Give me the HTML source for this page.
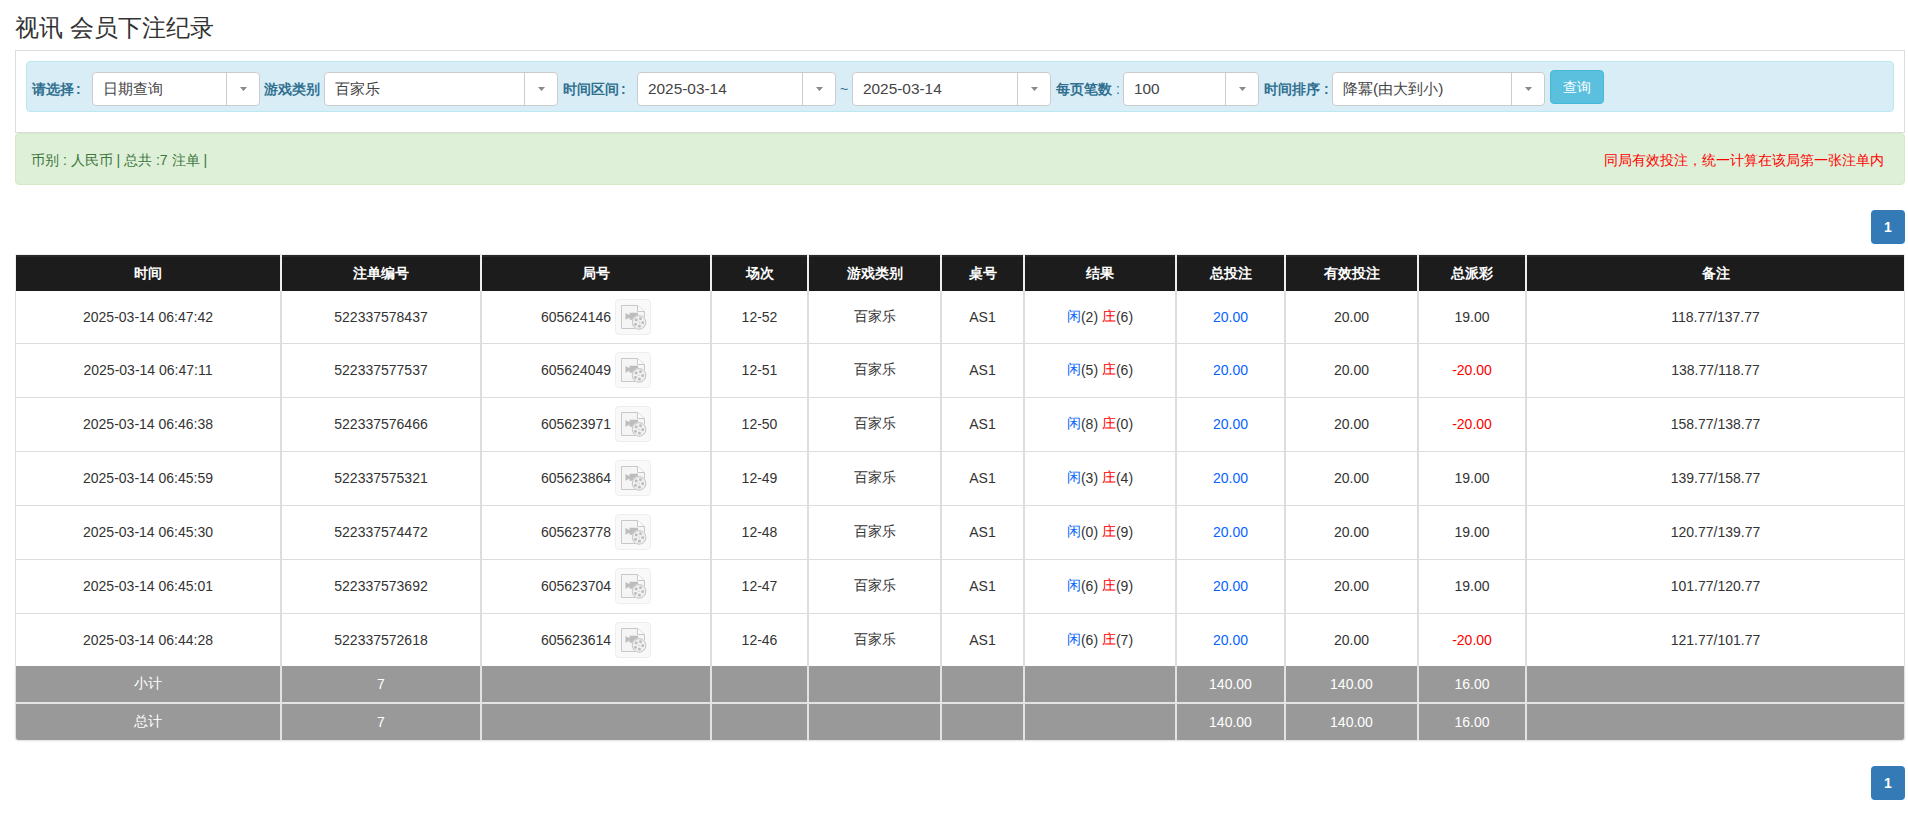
<!DOCTYPE html>
<html><head><meta charset="utf-8">
<style>
*{box-sizing:border-box;margin:0;padding:0}
html,body{width:1908px;height:813px;overflow:hidden;background:#fff}
body{font-family:"Liberation Sans",sans-serif;color:#333;position:relative;font-size:14px}
.a{position:absolute}
.title{left:15px;top:12px;font-size:24px;line-height:32px;color:#333;white-space:nowrap}
.panel{left:15px;top:50px;width:1890px;height:83px;border:1px solid #ddd;border-bottom-color:#ddd}
.info{left:26px;top:61px;width:1868px;height:51px;background:#d9edf7;border:1px solid #bce8f1;border-radius:4px}
.lbl{top:72px;height:34px;line-height:34px;font-size:14px;font-weight:bold;color:#31708f;white-space:nowrap}
.sel{top:72px;height:34px;background:#fff;border:1px solid #cbcbcb;border-radius:4px;font-size:15.4px;color:#444;line-height:32px;padding-left:10px;white-space:nowrap}
.sel .dv{position:absolute;right:32px;top:0;bottom:0;width:1px;background:#cbcbcb}
.sel .ct{position:absolute;right:12px;top:14px;width:7px;height:4px;display:block}
.btn{left:1550px;top:70px;width:54px;height:34px;background:#5bc0de;border:1px solid #46b8da;border-radius:4px;color:#fff;font-size:14px;line-height:32px;text-align:center}
.ok{left:15px;top:133px;width:1890px;height:52px;background:#dff0d8;border:1px solid #d6e9c6;border-radius:4px}
.okt{left:31px;top:150px;font-size:14px;line-height:20px;color:#3c763d;white-space:nowrap}
.red{right:24px;top:150px;font-size:14px;line-height:20px;color:#f00;white-space:nowrap}
.pg{left:1871px;width:34px;height:34px;background:#337ab7;border-radius:4px;color:#fff;font-weight:bold;font-size:14px;line-height:34px;text-align:center}
.tr{position:absolute;left:15px;width:1890px;display:flex}
.tr>div{flex:none;display:flex;align-items:center;justify-content:center;height:100%;white-space:nowrap;border-left:1px solid #ddd;border-right:1px solid #ddd}
.th{top:254px;height:37px}
.th>div{background:linear-gradient(#282828 0,#282828 2px,#1c1c1c 2px);color:#fff;font-weight:bold;font-size:14px;border-color:#eee!important;border-top:1px solid #eee}
.td{background:#fff}
.td>div{font-size:14px;color:#333}
.tot>div{background:#999;color:#fff;font-size:14px;border-color:#e3e3e3!important}
.ic{display:inline-block;width:36px;height:36px;margin-left:4px;border:1px solid #eee;border-radius:4px;background:#f9f9f9;vertical-align:middle}
.ic svg{display:block;margin:-1px}
.c{display:inline-flex;align-items:center;white-space:pre}.b{color:#0664ff}.r{color:#f00}
.hl{position:absolute;left:15px;width:1890px;height:1px;background:#ddd}
.tw{position:absolute;left:15px;top:666px;width:1890px;height:74px;border-radius:0 0 4px 4px;box-shadow:0 1px 2px rgba(0,0,0,.12)}
.last>div:first-child{border-bottom-left-radius:3px}.last>div:last-child{border-bottom-right-radius:3px}
.up .c{position:relative;top:-1px}
.th .c{position:relative;top:1px}
</style></head><body>

<div class="a title">视讯 会员下注纪录</div>
<div class="a panel"></div><div class="a info"></div>
<div class="a lbl" style="left:32px">请选择<span style="margin-left:2px">:</span></div>
<div class="a lbl" style="left:264px">游戏类别</div>
<div class="a lbl" style="left:563px">时间区间<span style="margin-left:2px">:</span></div>
<div class="a lbl" style="left:840px;font-weight:normal;font-size:14px">~</div>
<div class="a lbl" style="left:1056px">每页笔数<span style="font-weight:normal"> :</span></div>
<div class="a lbl" style="left:1264px">时间排序 :</div>
<div class="a sel" style="left:92px;width:168px">日期查询<span class="dv"></span><svg class="ct" viewBox="0 0 7 4"><path d="M0 0H7L3.5 4Z" fill="#888"/></svg></div>
<div class="a sel" style="left:324px;width:234px">百家乐<span class="dv"></span><svg class="ct" viewBox="0 0 7 4"><path d="M0 0H7L3.5 4Z" fill="#888"/></svg></div>
<div class="a sel" style="left:637px;width:199px">2025-03-14<span class="dv"></span><svg class="ct" viewBox="0 0 7 4"><path d="M0 0H7L3.5 4Z" fill="#888"/></svg></div>
<div class="a sel" style="left:852px;width:199px">2025-03-14<span class="dv"></span><svg class="ct" viewBox="0 0 7 4"><path d="M0 0H7L3.5 4Z" fill="#888"/></svg></div>
<div class="a sel" style="left:1123px;width:136px">100<span class="dv"></span><svg class="ct" viewBox="0 0 7 4"><path d="M0 0H7L3.5 4Z" fill="#888"/></svg></div>
<div class="a sel" style="left:1332px;width:213px">降冪(由大到小)<span class="dv"></span><svg class="ct" viewBox="0 0 7 4"><path d="M0 0H7L3.5 4Z" fill="#888"/></svg></div>
<div class="a btn">查询</div>
<div class="a ok"></div>
<div class="a okt">币别 : 人民币 | 总共 :7 注单 |</div>
<div class="a red">同局有效投注，统一计算在该局第一张注单内</div>
<div class="a pg" style="top:210px">1</div>
<div class="a pg" style="top:766px">1</div>
<div class="tr th"><div style="width:266px"><span class="c">时间</span></div><div style="width:200px"><span class="c">注单编号</span></div><div style="width:230px"><span class="c">局号</span></div><div style="width:97px"><span class="c">场次</span></div><div style="width:133px"><span class="c">游戏类别</span></div><div style="width:83px"><span class="c">桌号</span></div><div style="width:152px"><span class="c">结果</span></div><div style="width:109px"><span class="c">总投注</span></div><div style="width:133px"><span class="c">有效投注</span></div><div style="width:108px"><span class="c">总派彩</span></div><div style="width:379px"><span class="c">备注</span></div></div>
<div class="tr td" style="top:291px;height:52px"><div style="width:266px"><span class="c">2025-03-14 06:47:42</span></div><div style="width:200px"><span class="c">522337578437</span></div><div style="width:230px"><span class="c">605624146<span class="ic"><svg width="36" height="36" viewBox="0 0 36 36"><path d="M6.5 6.5H22.5L29.5 12.5V26L26 29.5H6.5Z" fill="#f5f5f5"/><path d="M20.5 29.5H6.5V6.5H22.5L29.5 12.5V26.5" fill="none" stroke="#c8c8c8" stroke-width="1"/><path d="M22.5 6.5V12.5H29.5" fill="#fcfcfc" stroke="#c8c8c8" stroke-width="1"/><path d="M10.5 14L14.5 16.3V13.8H23V20.8H14.5V18.5L10.5 20.8Z" fill="#bdbdbd"/><circle cx="24.1" cy="23.4" r="7.3" fill="#f9f9f9"/><circle cx="24.1" cy="23.4" r="6.8" fill="#efefef" stroke="#c4c4c4" stroke-width="1"/><circle cx="21.2" cy="20.9" r="1.4" fill="#bbb"/><circle cx="25.5" cy="19.7" r="1.4" fill="#bbb"/><circle cx="27.7" cy="23.7" r="1.4" fill="#bbb"/><circle cx="24.4" cy="27.2" r="1.4" fill="#bbb"/><circle cx="20.5" cy="25.4" r="1.4" fill="#bbb"/><circle cx="24.1" cy="23.4" r="0.6" fill="#c8c8c8"/></svg></span></span></div><div style="width:97px"><span class="c">12-52</span></div><div style="width:133px"><span class="c">百家乐</span></div><div style="width:83px"><span class="c">AS1</span></div><div style="width:152px"><span class="c"><span class="b">闲</span>(2) <span class="r">庄</span>(6)</span></div><div style="width:109px"><span class="c"><span class="b">20.00</span></span></div><div style="width:133px"><span class="c">20.00</span></div><div style="width:108px"><span class="c">19.00</span></div><div style="width:379px"><span class="c">118.77/137.77</span></div></div>
<div class="tr td up" style="top:344px;height:53px"><div style="width:266px"><span class="c">2025-03-14 06:47:11</span></div><div style="width:200px"><span class="c">522337577537</span></div><div style="width:230px"><span class="c">605624049<span class="ic"><svg width="36" height="36" viewBox="0 0 36 36"><path d="M6.5 6.5H22.5L29.5 12.5V26L26 29.5H6.5Z" fill="#f5f5f5"/><path d="M20.5 29.5H6.5V6.5H22.5L29.5 12.5V26.5" fill="none" stroke="#c8c8c8" stroke-width="1"/><path d="M22.5 6.5V12.5H29.5" fill="#fcfcfc" stroke="#c8c8c8" stroke-width="1"/><path d="M10.5 14L14.5 16.3V13.8H23V20.8H14.5V18.5L10.5 20.8Z" fill="#bdbdbd"/><circle cx="24.1" cy="23.4" r="7.3" fill="#f9f9f9"/><circle cx="24.1" cy="23.4" r="6.8" fill="#efefef" stroke="#c4c4c4" stroke-width="1"/><circle cx="21.2" cy="20.9" r="1.4" fill="#bbb"/><circle cx="25.5" cy="19.7" r="1.4" fill="#bbb"/><circle cx="27.7" cy="23.7" r="1.4" fill="#bbb"/><circle cx="24.4" cy="27.2" r="1.4" fill="#bbb"/><circle cx="20.5" cy="25.4" r="1.4" fill="#bbb"/><circle cx="24.1" cy="23.4" r="0.6" fill="#c8c8c8"/></svg></span></span></div><div style="width:97px"><span class="c">12-51</span></div><div style="width:133px"><span class="c">百家乐</span></div><div style="width:83px"><span class="c">AS1</span></div><div style="width:152px"><span class="c"><span class="b">闲</span>(5) <span class="r">庄</span>(6)</span></div><div style="width:109px"><span class="c"><span class="b">20.00</span></span></div><div style="width:133px"><span class="c">20.00</span></div><div style="width:108px"><span class="c"><span class="r">-20.00</span></span></div><div style="width:379px"><span class="c">138.77/118.77</span></div></div>
<div class="tr td up" style="top:398px;height:53px"><div style="width:266px"><span class="c">2025-03-14 06:46:38</span></div><div style="width:200px"><span class="c">522337576466</span></div><div style="width:230px"><span class="c">605623971<span class="ic"><svg width="36" height="36" viewBox="0 0 36 36"><path d="M6.5 6.5H22.5L29.5 12.5V26L26 29.5H6.5Z" fill="#f5f5f5"/><path d="M20.5 29.5H6.5V6.5H22.5L29.5 12.5V26.5" fill="none" stroke="#c8c8c8" stroke-width="1"/><path d="M22.5 6.5V12.5H29.5" fill="#fcfcfc" stroke="#c8c8c8" stroke-width="1"/><path d="M10.5 14L14.5 16.3V13.8H23V20.8H14.5V18.5L10.5 20.8Z" fill="#bdbdbd"/><circle cx="24.1" cy="23.4" r="7.3" fill="#f9f9f9"/><circle cx="24.1" cy="23.4" r="6.8" fill="#efefef" stroke="#c4c4c4" stroke-width="1"/><circle cx="21.2" cy="20.9" r="1.4" fill="#bbb"/><circle cx="25.5" cy="19.7" r="1.4" fill="#bbb"/><circle cx="27.7" cy="23.7" r="1.4" fill="#bbb"/><circle cx="24.4" cy="27.2" r="1.4" fill="#bbb"/><circle cx="20.5" cy="25.4" r="1.4" fill="#bbb"/><circle cx="24.1" cy="23.4" r="0.6" fill="#c8c8c8"/></svg></span></span></div><div style="width:97px"><span class="c">12-50</span></div><div style="width:133px"><span class="c">百家乐</span></div><div style="width:83px"><span class="c">AS1</span></div><div style="width:152px"><span class="c"><span class="b">闲</span>(8) <span class="r">庄</span>(0)</span></div><div style="width:109px"><span class="c"><span class="b">20.00</span></span></div><div style="width:133px"><span class="c">20.00</span></div><div style="width:108px"><span class="c"><span class="r">-20.00</span></span></div><div style="width:379px"><span class="c">158.77/138.77</span></div></div>
<div class="tr td up" style="top:452px;height:53px"><div style="width:266px"><span class="c">2025-03-14 06:45:59</span></div><div style="width:200px"><span class="c">522337575321</span></div><div style="width:230px"><span class="c">605623864<span class="ic"><svg width="36" height="36" viewBox="0 0 36 36"><path d="M6.5 6.5H22.5L29.5 12.5V26L26 29.5H6.5Z" fill="#f5f5f5"/><path d="M20.5 29.5H6.5V6.5H22.5L29.5 12.5V26.5" fill="none" stroke="#c8c8c8" stroke-width="1"/><path d="M22.5 6.5V12.5H29.5" fill="#fcfcfc" stroke="#c8c8c8" stroke-width="1"/><path d="M10.5 14L14.5 16.3V13.8H23V20.8H14.5V18.5L10.5 20.8Z" fill="#bdbdbd"/><circle cx="24.1" cy="23.4" r="7.3" fill="#f9f9f9"/><circle cx="24.1" cy="23.4" r="6.8" fill="#efefef" stroke="#c4c4c4" stroke-width="1"/><circle cx="21.2" cy="20.9" r="1.4" fill="#bbb"/><circle cx="25.5" cy="19.7" r="1.4" fill="#bbb"/><circle cx="27.7" cy="23.7" r="1.4" fill="#bbb"/><circle cx="24.4" cy="27.2" r="1.4" fill="#bbb"/><circle cx="20.5" cy="25.4" r="1.4" fill="#bbb"/><circle cx="24.1" cy="23.4" r="0.6" fill="#c8c8c8"/></svg></span></span></div><div style="width:97px"><span class="c">12-49</span></div><div style="width:133px"><span class="c">百家乐</span></div><div style="width:83px"><span class="c">AS1</span></div><div style="width:152px"><span class="c"><span class="b">闲</span>(3) <span class="r">庄</span>(4)</span></div><div style="width:109px"><span class="c"><span class="b">20.00</span></span></div><div style="width:133px"><span class="c">20.00</span></div><div style="width:108px"><span class="c">19.00</span></div><div style="width:379px"><span class="c">139.77/158.77</span></div></div>
<div class="tr td up" style="top:506px;height:53px"><div style="width:266px"><span class="c">2025-03-14 06:45:30</span></div><div style="width:200px"><span class="c">522337574472</span></div><div style="width:230px"><span class="c">605623778<span class="ic"><svg width="36" height="36" viewBox="0 0 36 36"><path d="M6.5 6.5H22.5L29.5 12.5V26L26 29.5H6.5Z" fill="#f5f5f5"/><path d="M20.5 29.5H6.5V6.5H22.5L29.5 12.5V26.5" fill="none" stroke="#c8c8c8" stroke-width="1"/><path d="M22.5 6.5V12.5H29.5" fill="#fcfcfc" stroke="#c8c8c8" stroke-width="1"/><path d="M10.5 14L14.5 16.3V13.8H23V20.8H14.5V18.5L10.5 20.8Z" fill="#bdbdbd"/><circle cx="24.1" cy="23.4" r="7.3" fill="#f9f9f9"/><circle cx="24.1" cy="23.4" r="6.8" fill="#efefef" stroke="#c4c4c4" stroke-width="1"/><circle cx="21.2" cy="20.9" r="1.4" fill="#bbb"/><circle cx="25.5" cy="19.7" r="1.4" fill="#bbb"/><circle cx="27.7" cy="23.7" r="1.4" fill="#bbb"/><circle cx="24.4" cy="27.2" r="1.4" fill="#bbb"/><circle cx="20.5" cy="25.4" r="1.4" fill="#bbb"/><circle cx="24.1" cy="23.4" r="0.6" fill="#c8c8c8"/></svg></span></span></div><div style="width:97px"><span class="c">12-48</span></div><div style="width:133px"><span class="c">百家乐</span></div><div style="width:83px"><span class="c">AS1</span></div><div style="width:152px"><span class="c"><span class="b">闲</span>(0) <span class="r">庄</span>(9)</span></div><div style="width:109px"><span class="c"><span class="b">20.00</span></span></div><div style="width:133px"><span class="c">20.00</span></div><div style="width:108px"><span class="c">19.00</span></div><div style="width:379px"><span class="c">120.77/139.77</span></div></div>
<div class="tr td up" style="top:560px;height:53px"><div style="width:266px"><span class="c">2025-03-14 06:45:01</span></div><div style="width:200px"><span class="c">522337573692</span></div><div style="width:230px"><span class="c">605623704<span class="ic"><svg width="36" height="36" viewBox="0 0 36 36"><path d="M6.5 6.5H22.5L29.5 12.5V26L26 29.5H6.5Z" fill="#f5f5f5"/><path d="M20.5 29.5H6.5V6.5H22.5L29.5 12.5V26.5" fill="none" stroke="#c8c8c8" stroke-width="1"/><path d="M22.5 6.5V12.5H29.5" fill="#fcfcfc" stroke="#c8c8c8" stroke-width="1"/><path d="M10.5 14L14.5 16.3V13.8H23V20.8H14.5V18.5L10.5 20.8Z" fill="#bdbdbd"/><circle cx="24.1" cy="23.4" r="7.3" fill="#f9f9f9"/><circle cx="24.1" cy="23.4" r="6.8" fill="#efefef" stroke="#c4c4c4" stroke-width="1"/><circle cx="21.2" cy="20.9" r="1.4" fill="#bbb"/><circle cx="25.5" cy="19.7" r="1.4" fill="#bbb"/><circle cx="27.7" cy="23.7" r="1.4" fill="#bbb"/><circle cx="24.4" cy="27.2" r="1.4" fill="#bbb"/><circle cx="20.5" cy="25.4" r="1.4" fill="#bbb"/><circle cx="24.1" cy="23.4" r="0.6" fill="#c8c8c8"/></svg></span></span></div><div style="width:97px"><span class="c">12-47</span></div><div style="width:133px"><span class="c">百家乐</span></div><div style="width:83px"><span class="c">AS1</span></div><div style="width:152px"><span class="c"><span class="b">闲</span>(6) <span class="r">庄</span>(9)</span></div><div style="width:109px"><span class="c"><span class="b">20.00</span></span></div><div style="width:133px"><span class="c">20.00</span></div><div style="width:108px"><span class="c">19.00</span></div><div style="width:379px"><span class="c">101.77/120.77</span></div></div>
<div class="tr td" style="top:614px;height:52px"><div style="width:266px"><span class="c">2025-03-14 06:44:28</span></div><div style="width:200px"><span class="c">522337572618</span></div><div style="width:230px"><span class="c">605623614<span class="ic"><svg width="36" height="36" viewBox="0 0 36 36"><path d="M6.5 6.5H22.5L29.5 12.5V26L26 29.5H6.5Z" fill="#f5f5f5"/><path d="M20.5 29.5H6.5V6.5H22.5L29.5 12.5V26.5" fill="none" stroke="#c8c8c8" stroke-width="1"/><path d="M22.5 6.5V12.5H29.5" fill="#fcfcfc" stroke="#c8c8c8" stroke-width="1"/><path d="M10.5 14L14.5 16.3V13.8H23V20.8H14.5V18.5L10.5 20.8Z" fill="#bdbdbd"/><circle cx="24.1" cy="23.4" r="7.3" fill="#f9f9f9"/><circle cx="24.1" cy="23.4" r="6.8" fill="#efefef" stroke="#c4c4c4" stroke-width="1"/><circle cx="21.2" cy="20.9" r="1.4" fill="#bbb"/><circle cx="25.5" cy="19.7" r="1.4" fill="#bbb"/><circle cx="27.7" cy="23.7" r="1.4" fill="#bbb"/><circle cx="24.4" cy="27.2" r="1.4" fill="#bbb"/><circle cx="20.5" cy="25.4" r="1.4" fill="#bbb"/><circle cx="24.1" cy="23.4" r="0.6" fill="#c8c8c8"/></svg></span></span></div><div style="width:97px"><span class="c">12-46</span></div><div style="width:133px"><span class="c">百家乐</span></div><div style="width:83px"><span class="c">AS1</span></div><div style="width:152px"><span class="c"><span class="b">闲</span>(6) <span class="r">庄</span>(7)</span></div><div style="width:109px"><span class="c"><span class="b">20.00</span></span></div><div style="width:133px"><span class="c">20.00</span></div><div style="width:108px"><span class="c"><span class="r">-20.00</span></span></div><div style="width:379px"><span class="c">121.77/101.77</span></div></div>
<div class="hl" style="top:343px"></div>
<div class="hl" style="top:397px"></div>
<div class="hl" style="top:451px"></div>
<div class="hl" style="top:505px"></div>
<div class="hl" style="top:559px"></div>
<div class="hl" style="top:613px"></div>
<div class="tw"></div><div class="tr tot" style="top:666px;height:36px"><div style="width:266px"><span class="c">小计</span></div><div style="width:200px"><span class="c">7</span></div><div style="width:230px"><span class="c"></span></div><div style="width:97px"><span class="c"></span></div><div style="width:133px"><span class="c"></span></div><div style="width:83px"><span class="c"></span></div><div style="width:152px"><span class="c"></span></div><div style="width:109px"><span class="c">140.00</span></div><div style="width:133px"><span class="c">140.00</span></div><div style="width:108px"><span class="c">16.00</span></div><div style="width:379px"><span class="c"></span></div></div>
<div class="tr tot last" style="top:704px;height:36px"><div style="width:266px"><span class="c">总计</span></div><div style="width:200px"><span class="c">7</span></div><div style="width:230px"><span class="c"></span></div><div style="width:97px"><span class="c"></span></div><div style="width:133px"><span class="c"></span></div><div style="width:83px"><span class="c"></span></div><div style="width:152px"><span class="c"></span></div><div style="width:109px"><span class="c">140.00</span></div><div style="width:133px"><span class="c">140.00</span></div><div style="width:108px"><span class="c">16.00</span></div><div style="width:379px"><span class="c"></span></div></div>
<div class="a" style="left:15px;top:702px;width:1890px;height:2px;background:#e3e3e3"></div>
</body></html>
